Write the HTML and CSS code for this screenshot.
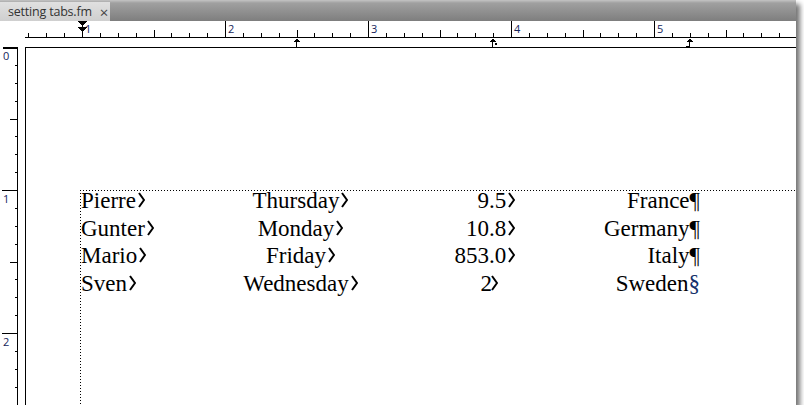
FILE: index.html
```html
<!DOCTYPE html>
<html lang="en">
<head>
    <meta charset="UTF-8">
    <title>setting tabs.fm</title>
    <link rel="stylesheet" href="styles.css">
</head>
<body>
    <!-- shared glyph for the tab symbol -->
    <svg class="defs" width="0" height="0">
        <symbol id="tab-mark" viewBox="0 0 9 16">
            <polyline points="3,1 8,8 3,15"/>
        </symbol>
    </svg>

    <div class="window">
        <div class="tabbar">
            <div class="doc-tab">
                <span class="doc-name">setting tabs.fm</span>
                <span class="doc-close">×</span>
            </div>
        </div>

        <!-- Horizontal ruler -->
        <div class="ruler-row">
            <div class="ruler-corner"></div>
            <svg class="hruler" id="hruler" width="771" height="26"></svg>
        </div>

        <div class="workspace">
            <!-- Vertical ruler -->
            <svg class="vruler" id="vruler" width="25" height="358"></svg>

            <div class="page">
                <div class="text-frame">
                    <div class="rows">
                        <div class="tab-row">
                            <span class="c-name">Pierre<svg class="tab"><use href="#tab-mark"/></svg></span>
                            <span class="c-day">Thursday<svg class="tab"><use href="#tab-mark"/></svg></span>
                            <span class="c-int">9</span>
                            <span class="c-frac">.5<svg class="tab"><use href="#tab-mark"/></svg></span>
                            <span class="c-country">France<span class="eop">¶</span></span>
                        </div>
                        <div class="tab-row">
                            <span class="c-name">Gunter<svg class="tab"><use href="#tab-mark"/></svg></span>
                            <span class="c-day">Monday<svg class="tab"><use href="#tab-mark"/></svg></span>
                            <span class="c-int">10</span>
                            <span class="c-frac">.8<svg class="tab"><use href="#tab-mark"/></svg></span>
                            <span class="c-country">Germany<span class="eop">¶</span></span>
                        </div>
                        <div class="tab-row">
                            <span class="c-name">Mario<svg class="tab"><use href="#tab-mark"/></svg></span>
                            <span class="c-day">Friday<svg class="tab"><use href="#tab-mark"/></svg></span>
                            <span class="c-int">853</span>
                            <span class="c-frac">.0<svg class="tab"><use href="#tab-mark"/></svg></span>
                            <span class="c-country">Italy<span class="eop">¶</span></span>
                        </div>
                        <div class="tab-row">
                            <span class="c-name">Sven<svg class="tab"><use href="#tab-mark"/></svg></span>
                            <span class="c-day">Wednesday<svg class="tab"><use href="#tab-mark"/></svg></span>
                            <span class="c-int"><span class="whole">2</span></span>
                            <span class="c-frac"><svg class="tab"><use href="#tab-mark"/></svg></span>
                            <span class="c-country">Sweden<span class="eos">§</span></span>
                        </div>
                    </div>
                </div>
            </div>
        </div>
    </div>

    <script>
        // 1 inch on screen, in pixels
        var INCH = 143;
        var EIGHTH = INCH / 8;

        function line(x1, y1, x2, y2) {
            return '<line x1="' + x1 + '" y1="' + y1 + '" x2="' + x2 + '" y2="' + y2 + '"/>';
        }

        // Horizontal ruler: inch "1" sits at x = 57 inside the ruler
        var h = line(0, 16.5, 771, 16.5);
        for (var k = -3; k < 60; k++) {
            var x = Math.round(57 + k * EIGHTH);
            if (x < 0) continue;
            if (x > 770) break;
            var tickTop = k % 8 === 0 ? 0 : (k % 4 === 0 ? 9 : 12);
            h += line(x + 0.5, tickTop, x + 0.5, 16);
            if (k % 8 === 0) {
                h += '<text x="' + (x + 3) + '" y="12">' + (1 + k / 8) + '</text>';
            }
        }

        // Left margin / first indent markers
        h += '<polygon class="mark" points="52.5,0 62.5,0 57.5,5"/>';
        h += '<polygon class="mark" points="52.5,6 62.5,6 57.5,11"/>';

        // Tab stops below the ruler line
        var tabStops = [
            { x: 271, kind: "center" },
            { x: 467, kind: "decimal" },
            { x: 664, kind: "right" }
        ];
        tabStops.forEach(function(stop) {
            var cx = stop.x + 0.5;
            h += '<polygon class="mark" points="' + (cx - 3.5) + ',21 ' + (cx + 3.5) + ',21 ' + cx + ',17.5"/>';
            h += line(cx, 21, cx, 26);
            if (stop.kind === "decimal") {
                h += '<rect class="mark" x="' + (stop.x + 3) + '" y="22" width="2" height="2"/>';
            }
            if (stop.kind === "right") {
                h += line(stop.x - 3, 25.5, cx, 25.5);
            }
        });
        document.getElementById("hruler").innerHTML = h;

        // Vertical ruler
        var v = line(17.5, 0, 17.5, 358);
        for (var j = 0; j < 21; j++) {
            var y = Math.round(j * EIGHTH);
            if (j === 0) {
                v += '<rect class="mark" x="3" y="0" width="15" height="2"/>';
            } else if (j % 8 === 0) {
                v += line(2, y + 0.5, 17, y + 0.5);
            } else {
                v += line(j % 4 === 0 ? 10 : 15, y + 0.5, 17, y + 0.5);
            }
            if (j % 8 === 0) {
                v += '<text x="3" y="' + (y + 13) + '">' + (j / 8) + '</text>';
            }
        }
        document.getElementById("vruler").innerHTML = v;
    </script>
</body>
</html>
```

FILE: styles.css
```css
body {
    margin: 0;
    background-color: #fff;
    font-family: "Liberation Serif", serif;
}
.defs {
    position: absolute;
    width: 0;
    height: 0;
}
.window {
    width: 796px;
    height: 405px;
    display: flex;
    flex-direction: column;
    background-color: #fff;
    box-shadow: 4px 4px 5px rgba(0, 0, 0, 0.55);
    overflow: hidden;
}
.tabbar {
    height: 21px;
    flex: none;
    display: flex;
    align-items: flex-end;
    background: linear-gradient(#c4c4c4 0, #a0a0a0 3px, #7e7e7e 100%);
}
.doc-tab {
    width: 110px;
    height: 19px;
    box-sizing: border-box;
    padding-left: 8px;
    display: flex;
    align-items: center;
    gap: 8px;
    background: linear-gradient(#e0e0e0, #cfcfcf);
    font: 12.5px "Open Sans", sans-serif;
    letter-spacing: -0.2px;
    white-space: nowrap;
    color: #333;
}
.doc-name, .doc-close {
    flex: none;
}
.doc-close {
    font-size: 15px;
    color: #444;
}
.ruler-row {
    height: 26px;
    flex: none;
    display: flex;
}
.ruler-corner {
    width: 25px;
    flex: none;
}
.hruler, .vruler {
    display: block;
    flex: none;
    stroke: #000;
    stroke-width: 1;
    shape-rendering: crispEdges;
}
.hruler text, .vruler text {
    stroke: none;
    fill: #14245a;
    font: 11px "Open Sans", sans-serif;
}
.hruler .mark, .vruler .mark {
    stroke: none;
    fill: #000;
}
.workspace {
    flex: 1;
    display: flex;
    min-height: 0;
}
.page {
    flex: 1;
    display: flex;
    flex-direction: column;
    border-left: 1px solid #000;
    border-top: 1px solid #000;
    overflow: hidden;
}
.text-frame {
    flex: 1;
    margin: 142px 0 0 54px;
    padding-left: 1px;
    background:
        repeating-linear-gradient(to right, #000 0 1px, transparent 1px 3px) top left / 100% 1px no-repeat,
        repeating-linear-gradient(to bottom, #000 0 1px, transparent 1px 3px) top left / 1px 100% no-repeat;
}
.rows {
    margin-top: -3px;
}
.tab-row {
    display: grid;
    grid-template-columns: 119px 192px 97px 68px 143px;
    font-size: 23px;
    line-height: 27.5px;
    color: #000;
    white-space: nowrap;
}
.c-name, .c-frac {
    text-align: left;
}
.c-day {
    text-align: center;
}
.c-int, .c-country {
    text-align: right;
}
.tab {
    width: 9px;
    height: 16px;
    vertical-align: baseline;
    fill: none;
    stroke: #000;
    stroke-width: 2;
}
.c-day .tab {
    margin-right: -9px;
}
.whole {
    margin-right: -3px;
}
.eop {
    color: #000;
}
.eos {
    color: #14306a;
}
```
